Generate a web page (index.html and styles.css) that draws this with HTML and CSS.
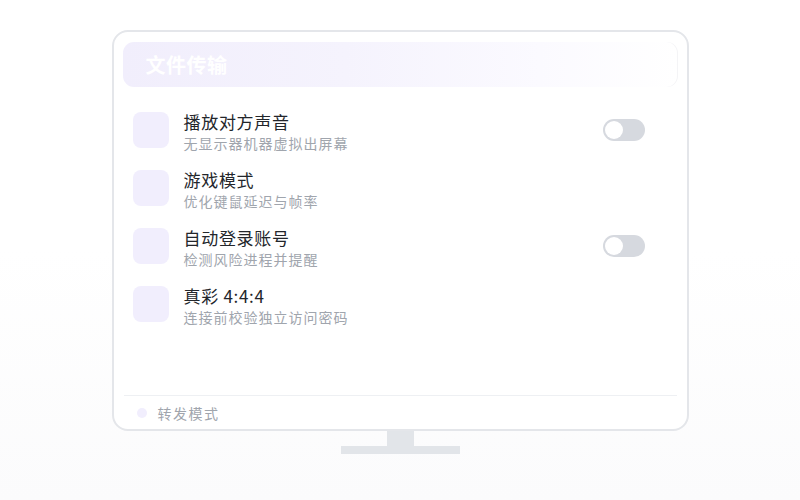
FILE: index.html
```html
<!DOCTYPE html>
<html lang="zh-CN">
<head>
<meta charset="utf-8">
<link rel="stylesheet" href="styles.css">
</head>
<body>
<div class="stage">
  <div class="monitor">
    <div class="header"><span class="header-title">文件传输</span></div>
    <div class="list">
      <div class="row">
        <div class="icon"></div>
        <div class="texts">
          <div class="title">播放对方声音</div>
          <div class="sub">无显示器机器虚拟出屏幕</div>
        </div>
        <div class="toggle"><span class="knob"></span></div>
      </div>
      <div class="row">
        <div class="icon"></div>
        <div class="texts">
          <div class="title">游戏模式</div>
          <div class="sub">优化键鼠延迟与帧率</div>
        </div>
      </div>
      <div class="row">
        <div class="icon"></div>
        <div class="texts">
          <div class="title">自动登录账号</div>
          <div class="sub">检测风险进程并提醒</div>
        </div>
        <div class="toggle"><span class="knob"></span></div>
      </div>
      <div class="row">
        <div class="icon"></div>
        <div class="texts">
          <div class="title">真彩 4:4:4</div>
          <div class="sub">连接前校验独立访问密码</div>
        </div>
      </div>
    </div>
    <div class="footer">
      <span class="dot"></span>
      <span class="footer-text">转发模式</span>
    </div>
  </div>
  <div class="neck"></div>
  <div class="base"></div>
</div>
</body>
</html>
```
FILE: styles.css
```css
html, body {
  margin: 0;
  padding: 0;
}
body {
  width: 800px;
  height: 500px;
  background: linear-gradient(180deg, #ffffff 0%, #ffffff 50%, #fbfbfc 100%);
  font-family: "Noto Sans CJK SC", "Noto Sans", sans-serif;
  overflow: hidden;
}
.stage {
  display: flex;
  flex-direction: column;
  align-items: center;
  padding-top: 30px;
}
.monitor {
  box-sizing: border-box;
  width: 577px;
  height: 401px;
  border: 2px solid #e4e6ea;
  border-radius: 16px;
  background: #ffffff;
  padding: 10px 9px 0 9px;
  display: flex;
  flex-direction: column;
}
.header {
  height: 45px;
  border-radius: 11px;
  background: linear-gradient(90deg, #f1eefc 0%, #f5f3fd 40%, #fbfaff 75%, #ffffff 100%);
  box-shadow: inset -1px 0 0 #f4f4f6;
  display: flex;
  align-items: center;
  padding-left: 23px;
}
.header-title {
  color: #ffffff;
  font-size: 20px;
  font-weight: 700;
  letter-spacing: 0.5px;
}
.list {
  flex: 1;
  padding: 25px 33px 0 10px;
  display: flex;
  flex-direction: column;
  gap: 22px;
}
.row {
  display: flex;
  align-items: center;
  height: 36px;
}
.icon {
  width: 36px;
  height: 36px;
  border-radius: 8px;
  background: #f1eefd;
  flex: none;
}
.texts {
  flex: 1;
  margin-left: 15px;
  padding-top: 4px;
  display: flex;
  flex-direction: column;
}
.title {
  font-size: 17px;
  color: #23262b;
  line-height: 22px;
  letter-spacing: 0.7px;
  white-space: nowrap;
}
.sub {
  font-size: 14px;
  color: #a0a5ad;
  line-height: 20px;
  letter-spacing: 1px;
  white-space: nowrap;
}
.toggle {
  width: 42px;
  height: 22px;
  border-radius: 11px;
  background: #d6d9df;
  position: relative;
  flex: none;
}
.knob {
  position: absolute;
  left: 2px;
  top: 2px;
  width: 18px;
  height: 18px;
  border-radius: 50%;
  background: #ffffff;
}
.footer {
  height: 33px;
  margin: 0 1px;
  border-top: 1px solid #eef0f3;
  display: flex;
  align-items: center;
  padding-left: 13px;
}
.dot {
  width: 10px;
  height: 10px;
  border-radius: 50%;
  background: #f1eefd;
}
.footer-text {
  margin-left: 11px;
  font-size: 14px;
  color: #a0a5ad;
  letter-spacing: 1.5px;
}
.neck {
  width: 27px;
  height: 15px;
  background: #e2e5e9;
}
.base {
  width: 119px;
  height: 8px;
  background: #e2e5e9;
}
```
